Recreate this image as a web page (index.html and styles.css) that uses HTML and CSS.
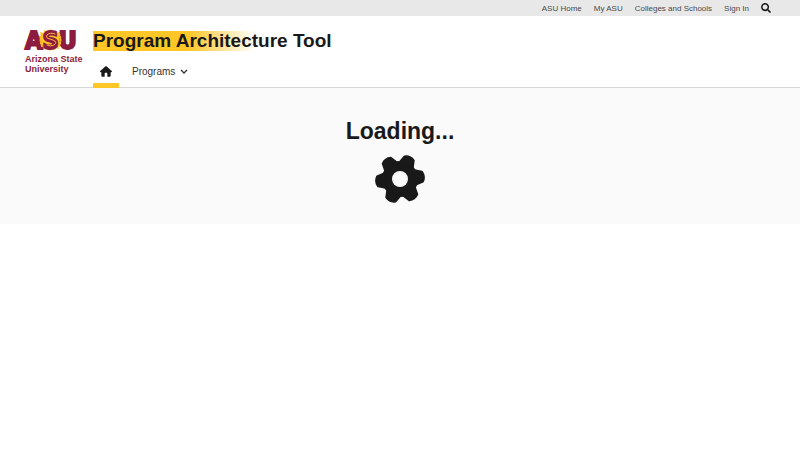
FILE: index.html
```html
<!DOCTYPE html>
<html lang="en">
<head>
<meta charset="utf-8">
<title>Program Architecture Tool</title>
<meta name="viewport" content="width=device-width, initial-scale=1">
<link rel="stylesheet" href="styles.css">
</head>
<body>
<header>
  <nav class="topbar" aria-label="University">
    <a href="#">ASU Home</a>
    <a href="#">My ASU</a>
    <a href="#">Colleges and Schools</a>
    <a href="#">Sign In</a>
    <button class="search" type="button" aria-label="Search">
      <svg viewBox="0 0 512 512" width="10" height="10"><path fill="currentColor" d="M505 442.700L405.300 343c-4.500-4.500-10.600-7-17-7H372c27.600-35.300 44-79.700 44-128C416 93.100 322.900 0 208 0S0 93.100 0 208s93.100 208 208 208c48.300 0 92.700-16.400 128-44v16.300c0 6.400 2.500 12.500 7 17l99.700 99.700c9.400 9.400 24.600 9.400 33.900 0l28.300-28.300c9.400-9.400 9.400-24.600.1-34zM208 336c-70.700 0-128-57.200-128-128 0-70.700 57.200-128 128-128 70.700 0 128 57.200 128 128 0 70.700-57.200 128-128 128z"/></svg>
    </button>
  </nav>
  <div class="masthead">
    <a class="logo" href="#">
      <svg viewBox="0 0 54 24" width="54" height="24" role="img" aria-label="ASU">
        <path fill="#ffc627" d="M26 2l2 3 3-2 0 3 4-1-1 4 4 0-2 3 3 2-3 2 2 3-5 0 1 3-4-1 0 2-3-1-2 2-2-2-3 1 0-2-4 1 1-3-5 0 2-3-3-2 3-2-2-3 4 0-1-4 4 1 0-3 3 2z"/>
        <text class="letters" x="0" y="22">ASU</text>
        <g fill="none" stroke="#ffb92a" stroke-linecap="round">
          <path stroke-width="2" stroke-dasharray="1 2" d="M17 7q-3 6 0 12M34 7q3 6 0 12"/>
          <path stroke-width="1" d="M30 7q-5-2-8 1q-2 3 3 4l3 1q5 2 1 5q-3 2-7 0"/>
        </g>
      </svg>
      <span class="wordmark">Arizona State<br>University</span>
    </a>
    <div class="site">
      <h1><span>Program Architecture Tool</span></h1>
      <nav class="menu" aria-label="Main">
        <a class="home" href="#" aria-label="Home">
          <svg viewBox="0 0 576 512" width="12" height="11"><path fill="currentColor" d="M575.800 255.500c0 18-15 32.100-32 32.100h-32l.7 160.200c0 35-28 64.200-64 64.200H352V352c0-18-14-32-32-32h-64c-18 0-32 14-32 32v160H128c-36 0-64-29-64-64V287.600H32c-18 0-32-14-32-32.100 0-9 3-17 10-24L266.400 8c7-7 15-8 22-8s15 2 21 7l255.400 224.500c8 7 12 15 11 24z"/></svg>
        </a>
        <button type="button">Programs
          <svg viewBox="0 0 8 8" width="8" height="8"><path d="M1 3l3 3 3-3" fill="none" stroke="currentColor" stroke-width="1.300"/></svg>
        </button>
      </nav>
    </div>
  </div>
</header>
<main class="loading">
  <h2>Loading...</h2>
  <svg class="gear" viewBox="-26 -26 52 52" width="52" height="52" aria-hidden="true">
    <defs><path id="tooth" d="M-7.500 -14L-5 -22.500Q0 -25.500 5 -22.500L7.500 -14z"/></defs>
    <circle r="13" fill="none" stroke="currentColor" stroke-width="10"/>
    <g fill="currentColor" stroke="currentColor" stroke-width="2" stroke-linejoin="round">
      <use href="#tooth" transform="rotate(24)"/>
      <use href="#tooth" transform="rotate(84)"/>
      <use href="#tooth" transform="rotate(144)"/>
      <use href="#tooth" transform="rotate(204)"/>
      <use href="#tooth" transform="rotate(264)"/>
      <use href="#tooth" transform="rotate(324)"/>
    </g>
  </svg>
</main>
</body>
</html>
```
FILE: styles.css
```css
* { box-sizing: border-box; }
body {
  margin: 0;
  background: #fff;
  color: #191919;
  font-family: "Liberation Sans", Arial, sans-serif;
}
a { color: inherit; text-decoration: none; }
button {
  padding: 0;
  border: 0;
  background: none;
  color: inherit;
  font: inherit;
}
svg { display: block; }
.topbar {
  display: flex;
  justify-content: flex-end;
  align-items: center;
  gap: 12px;
  height: 16px;
  padding-right: 29px;
  background: #e8e8e8;
  color: #484848;
  font-size: 8px;
}
.search { color: #191919; }
.masthead {
  display: flex;
  gap: 10px;
  padding-left: 25px;
  border-bottom: 1px solid #d8d8d8;
}
.logo { padding-top: 11px; width: 58px; color: #8c1d40; }
.logo svg { overflow: visible; }
.letters {
  fill: #8c1d40;
  stroke: #8c1d40;
  stroke-width: 2px;
  font: bold 25px "DejaVu Sans Condensed", "DejaVu Sans", sans-serif;
}
.wordmark {
  display: block;
  margin-top: 3px;
  font-size: 9px;
  font-weight: bold;
  line-height: 10px;
  white-space: nowrap;
}
.site { padding-top: 14px; }
h1 { margin: 0; font-size: 19px; line-height: 22px; }
h1 span {
  background: linear-gradient(to right, #ffc627 0 40%, transparent 68%) no-repeat center / 100% 20px;
}
.menu {
  display: flex;
  gap: 13px;
  margin-top: 11px;
  height: 24px;
  font-size: 10px;
}
.home {
  display: flex;
  justify-content: center;
  width: 26px;
  height: 25px;
  padding-top: 3px;
  border-bottom: 5px solid #ffc627;
}
.menu button {
  display: flex;
  align-items: center;
  gap: 5px;
  height: 16px;
  color: #333;
}
.loading {
  display: flex;
  flex-direction: column;
  align-items: center;
  padding: 28px 0 19px;
  background: #fafafa;
}
h2 { margin: 0 0 7px; font-size: 23px; line-height: 30px; }
```
